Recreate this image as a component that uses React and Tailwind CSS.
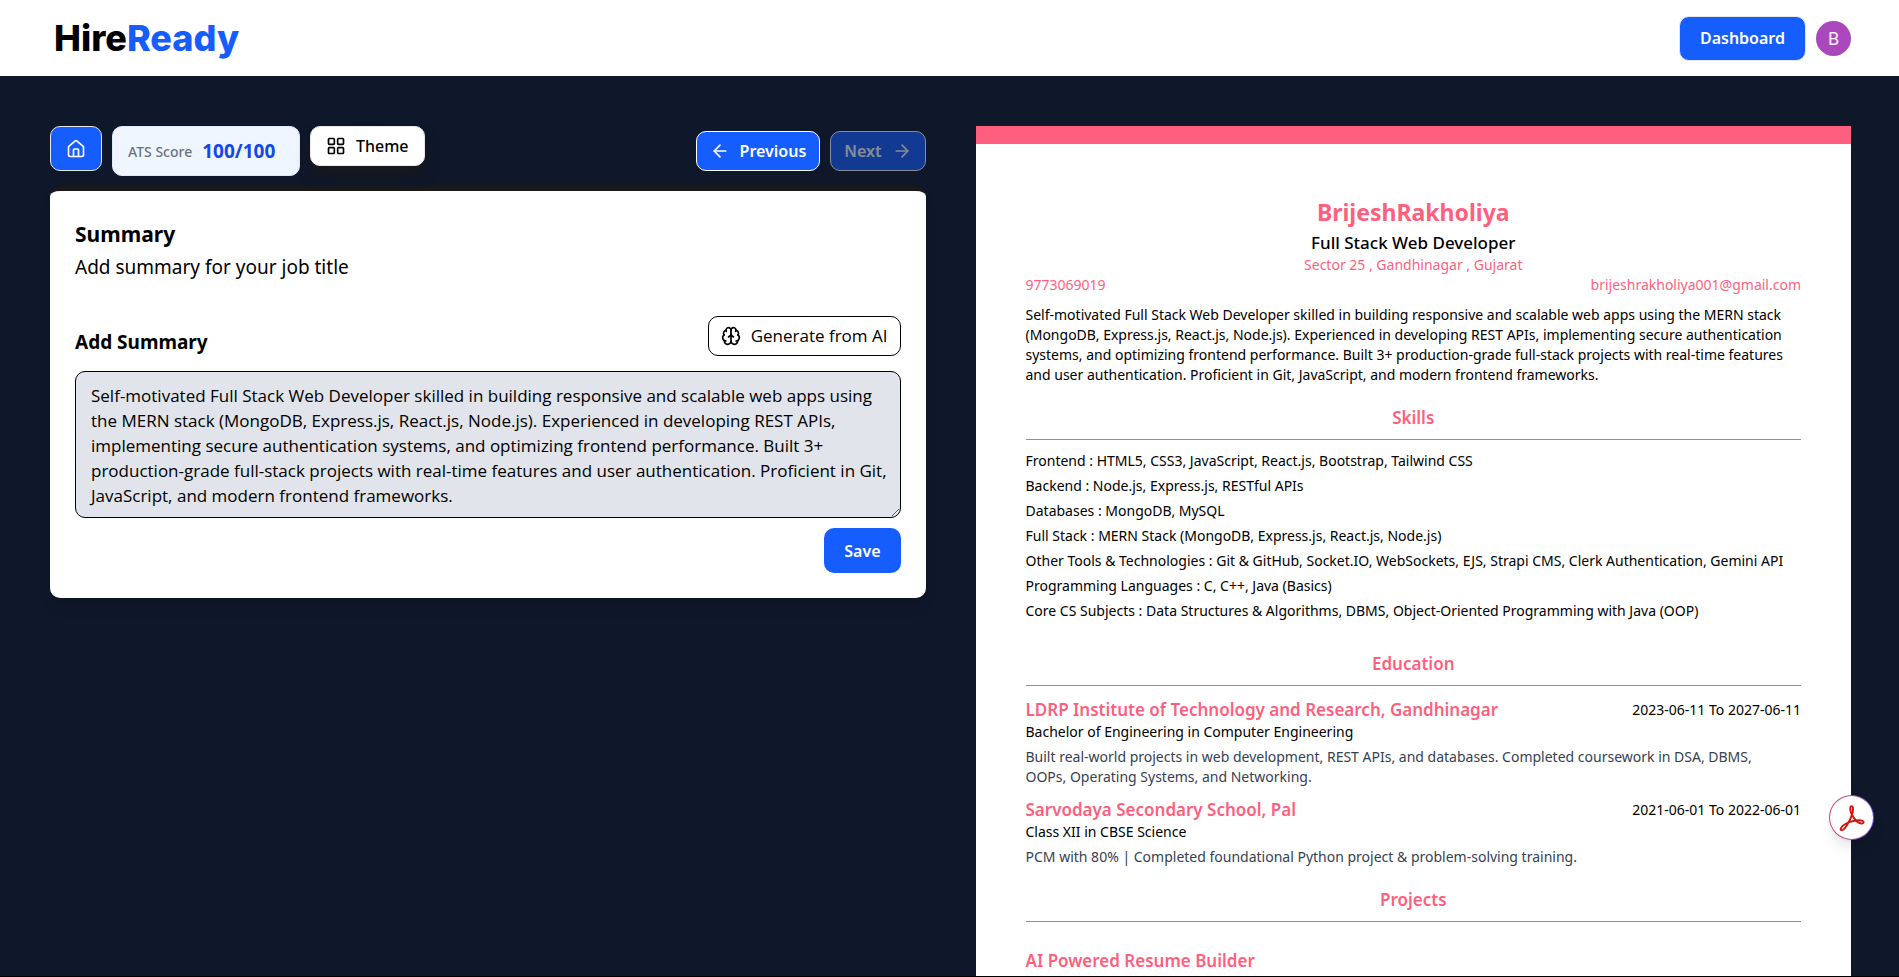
import { House, LayoutGrid, ArrowLeft, ArrowRight, Brain } from "lucide-react";

const SUMMARY =
  "Self-motivated Full Stack Web Developer skilled in building responsive and scalable web apps using the MERN stack (MongoDB, Express.js, React.js, Node.js). Experienced in developing REST APIs, implementing secure authentication systems, and optimizing frontend performance. Built 3+ production-grade full-stack projects with real-time features and user authentication. Proficient in Git, JavaScript, and modern frontend frameworks.";

const SKILLS = [
  ["Frontend", "HTML5, CSS3, JavaScript, React.js, Bootstrap, Tailwind CSS"],
  ["Backend", "Node.js, Express.js, RESTful APIs"],
  ["Databases", "MongoDB, MySQL"],
  ["Full Stack", "MERN Stack (MongoDB, Express.js, React.js, Node.js)"],
  ["Other Tools & Technologies", "Git & GitHub, Socket.IO, WebSockets, EJS, Strapi CMS, Clerk Authentication, Gemini API"],
  ["Programming Languages", "C, C++, Java (Basics)"],
  ["Core CS Subjects", "Data Structures & Algorithms, DBMS, Object-Oriented Programming with Java (OOP)"],
];

const EDUCATION = [
  {
    school: "LDRP Institute of Technology and Research, Gandhinagar",
    dates: "2023-06-11 To 2027-06-11",
    degree: "Bachelor of Engineering in Computer Engineering",
    text: "Built real-world projects in web development, REST APIs, and databases. Completed coursework in DSA, DBMS, OOPs, Operating Systems, and Networking.",
  },
  {
    school: "Sarvodaya Secondary School, Pal",
    dates: "2021-06-01 To 2022-06-01",
    degree: "Class XII in CBSE Science",
    text: "PCM with 80% | Completed foundational Python project & problem-solving training.",
  },
];

function Header() {
  return (
    <header className="flex h-[76px] shrink-0 items-center justify-between bg-white pl-[54px] pr-12">
      <a href="#" className="font-['Inter'] text-[36px] leading-none font-extrabold text-black">
        Hire<span className="text-[#155dfc]">Ready</span>
      </a>
      <div className="flex items-center gap-[10px]">
        <button className="h-[45px] rounded-[10px] border border-gray-200 bg-[#155dfc] px-5 text-[16px] font-semibold text-white">
          Dashboard
        </button>
        <button aria-label="Account" className="size-[35px] rounded-full bg-[#ab47bc] font-['Roboto'] text-[18px] text-white/90">
          B
        </button>
      </div>
    </header>
  );
}

function Toolbar() {
  return (
    <div className="flex items-start justify-between">
      <div className="flex items-start gap-[10px]">
        <a href="#" aria-label="Home" className="flex h-[45px] w-[52px] items-center justify-center rounded-[10px] border border-gray-200 bg-[#155dfc] text-white">
          <House size={20} strokeWidth={2} />
        </a>
        <div className="flex h-[50px] w-[188px] items-center gap-[10px] rounded-[10px] border border-blue-100 bg-[#eff6ff] pl-[15px]">
          <span className="text-[14px] font-medium text-gray-500">ATS Score</span>
          <span className="text-[19px] font-bold text-[#1447e6]">100/100</span>
        </div>
        <button className="flex h-[40px] items-center gap-[10px] rounded-[10px] border border-gray-200 bg-white px-[15px] text-[16px] font-medium text-black shadow-lg shadow-[#1a1a1a]">
          <LayoutGrid size={20} strokeWidth={2} />
          Theme
        </button>
      </div>
      <div className="mt-[5px] flex gap-[10px] text-[16px] font-semibold text-white">
        <button className="flex h-[40px] items-center gap-[10px] rounded-[10px] border border-white bg-[#155dfc] px-[13px]">
          <ArrowLeft size={20} strokeWidth={2} />
          Previous
        </button>
        <button disabled className="flex h-[40px] items-center gap-[10px] rounded-[10px] border border-white bg-[#155dfc] px-[13px] opacity-50">
          Next
          <ArrowRight size={20} strokeWidth={2} />
        </button>
      </div>
    </div>
  );
}

function SummaryForm() {
  return (
    <form className="mt-[10px] rounded-[10px] border-t-[5px] border-[#1a1a1a] bg-white p-[25px] text-black shadow-lg" onSubmit={(e) => e.preventDefault()}>
      <h2 className="text-[21px] leading-[36px] font-bold">Summary</h2>
      <p className="text-[19px] leading-[30px]">Add summary for your job title</p>
      <div className="mt-[34px] flex items-end justify-between">
        <label htmlFor="summary" className="text-[19px] leading-[28px] font-bold">Add Summary</label>
        <button type="button" className="flex h-[40px] items-center gap-[10px] rounded-[10px] border border-black px-[12px] font-['Open_Sans'] text-[17px] font-medium">
          <Brain size={20} strokeWidth={2} />
          Generate from AI
        </button>
      </div>
      <textarea
        id="summary"
        defaultValue={SUMMARY}
        className="mt-[15px] block h-[147px] w-full overflow-hidden rounded-[10px] border border-black bg-[#e1e4eb] pr-[5px] pl-[15px] py-[11px] font-['Open_Sans'] text-[17px] leading-[25px]"
      />
      <div className="mt-[10px] flex justify-end">
        <button type="submit" className="h-[45px] rounded-[10px] bg-[#155dfc] px-5 text-[16px] font-semibold text-white">Save</button>
      </div>
    </form>
  );
}

function SectionTitle({ children }) {
  return <h3 className="border-b border-[#ff5f7e] pb-[10px] text-center text-[17px] leading-[22px] font-semibold text-[#ff5f7e]">{children}</h3>;
}

function EntryTitle({ children }) {
  return <h4 className="text-[17px] leading-[25px] font-semibold text-[#ff5f7e]">{children}</h4>;
}

function Resume() {
  return (
    <article className="min-w-0 border-t-[18px] border-[#ff5f7e] bg-white px-[50px] py-[50px] text-[14px] leading-[20px] text-black">
      <h1 className="text-center text-[23px] leading-[36px] font-bold text-[#ff5f7e]">BrijeshRakholiya</h1>
      <h2 className="text-center text-[17px] leading-[25px] font-medium">Full Stack Web Developer</h2>
      <p className="text-center text-[#ff5f7e]">Sector 25 , Gandhinagar , Gujarat</p>
      <div className="flex justify-between text-[#ff5f7e]">
        <span>9773069019</span>
        <span>brijeshrakholiya001@gmail.com</span>
      </div>
      <p className="mt-[10px]">{SUMMARY}</p>

      <section className="mt-[22px]">
        <SectionTitle>Skills</SectionTitle>
        <ul className="mt-[11px] flex flex-col gap-[5px]">
          {SKILLS.map(([name, items]) => (
            <li key={name}>{name} : {items}</li>
          ))}
        </ul>
      </section>

      <section className="mt-[32px]">
        <SectionTitle>Education</SectionTitle>
        <div className="mt-[11px] flex flex-col gap-[10px]">
          {EDUCATION.map((e) => (
            <div key={e.school}>
              <div className="flex items-center justify-between">
                <EntryTitle>{e.school}</EntryTitle>
                <span>{e.dates}</span>
              </div>
              <p>{e.degree}</p>
              <p className="mt-[5px] pr-[10px] text-[#364153]">{e.text}</p>
            </div>
          ))}
        </div>
      </section>

      <section className="mt-[22px]">
        <SectionTitle>Projects</SectionTitle>
        <div className="mt-[26px]">
          <EntryTitle>AI Powered Resume Builder</EntryTitle>
        </div>
      </section>
    </article>
  );
}

function PdfButton() {
  return (
    <button aria-label="Open in PDF" className="fixed top-[795px] right-[25px] flex size-[45px] items-center justify-center rounded-full bg-linear-to-r from-[#d93a5a] to-[#6b4de6] p-px shadow-lg">
      <span className="flex size-full items-center justify-center rounded-full bg-white">
        <svg width="26" height="26" viewBox="0 0 26 26" fill="none" stroke="#d4140c" strokeWidth="1.9" strokeLinejoin="round">
          <path d="M12.6 1.2c-2 0-1.700 4.600.2 8.300 1.800 3.500 5.500 8.300 9.200 9 3 .5 3.400-2.200 1-2.900-3.700-1-11.200.4-15.800 2.900-4.700 2.500-6.800 6.100-4.800 6.600 3 .7 8.600-9.300 10.700-15.600 1.400-4.300 1.300-8.300-.5-8.300z" />
        </svg>
      </span>
    </button>
  );
}

export default function App() {
  return (
    <div className="flex h-screen flex-col overflow-hidden border-b border-black bg-[#0f172a] font-['Noto_Sans',sans-serif]">
      <Header />
      <main className="grid min-h-0 grow grid-cols-2 gap-[50px] overflow-hidden pt-[50px] pr-12 pl-[50px]">
        <div className="min-w-0">
          <Toolbar />
          <SummaryForm />
        </div>
        <Resume />
      </main>
      <PdfButton />
    </div>
  );
}
